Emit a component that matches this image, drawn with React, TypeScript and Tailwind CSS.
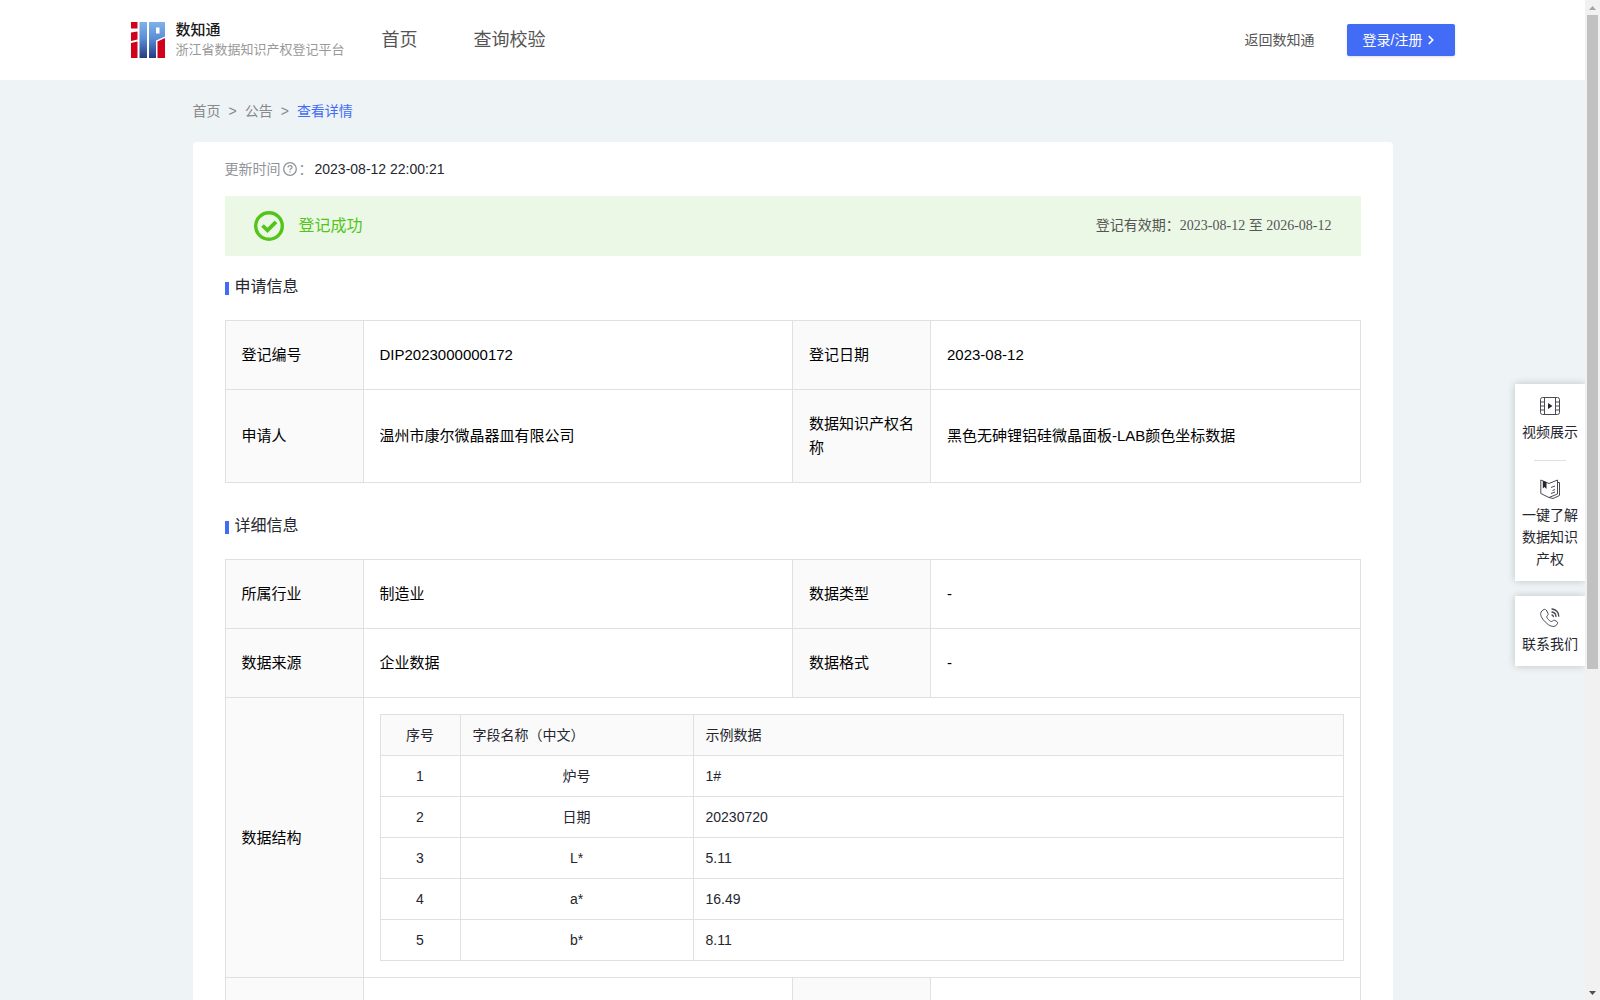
import React from 'react';
import { ChevronRight } from 'lucide-react';

const fields = [
  { name: '炉号', sample: '1#' },
  { name: '日期', sample: '20230720' },
  { name: 'L*', sample: '5.11' },
  { name: 'a*', sample: '16.49' },
  { name: 'b*', sample: '8.11' },
];

function Logo() {
  return (
    <svg width="34" height="36" viewBox="0 0 34 36" aria-hidden="true">
      <defs>
        <linearGradient id="logo-blue" gradientUnits="userSpaceOnUse" x1="0" y1="0" x2="0" y2="36">
          <stop offset="0" stopColor="#7fb2ea" />
          <stop offset="0.45" stopColor="#5b8fd6" />
          <stop offset="1" stopColor="#243a85" />
        </linearGradient>
      </defs>
      <path fill="#d0021b" d="M0 0h6.500v6.500H0zM0 10.500l6.500-1v8L0 19zM0 21l6.500-1.500V36H0z" />
      <path fill="url(#logo-blue)" d="M8.500 0h7.500v36H8.500z" />
      <path fill="url(#logo-blue)" d="M18 0h16v14.500l-9 4V36h-7zM25 5.500v6h3.500V5.500z" fillRule="evenodd" />
      <path fill="#d0021b" d="M26.500 19.500L34 16V36h-7.500z" />
    </svg>
  );
}

function VideoIcon() {
  return (
    <svg width="20" height="20" viewBox="0 0 20 20" fill="none" stroke="#4a4a52" aria-hidden="true">
      <rect x="0.5" y="1.5" width="19" height="17" rx="2" />
      <path d="M4.5 1.5v17M15.5 1.5v17M0.5 6h4M0.5 10h4M0.5 14h4M15.5 6h4M15.5 10h4M15.5 14h4" />
      <path d="M8 7v6l4.500-3z" fill="#25262f" stroke="none" />
    </svg>
  );
}

function BookIcon() {
  return (
    <svg width="20" height="20" viewBox="0 0 20 20" fill="none" stroke="#4a4a52" strokeLinejoin="round" aria-hidden="true">
      <path d="M9 4.500L.8 1v13.500L9 18.500l8.500-3.500V1z" />
      <path d="M17.500 3.500h2V16.500L13 19.500l-4-1M11 8.500l4-1.500M12.500 11.500l2.500-1M11 14.500l4-1.500" />
      <path d="M2.800 1.800v7.700l1.700-1.500L6.500 10V3.200z" fill="#25262f" stroke="none" />
    </svg>
  );
}

function PhoneIcon() {
  return (
    <svg width="20" height="20" viewBox="0 0 20 20" fill="none" stroke="#4a4a52" strokeLinecap="round" strokeLinejoin="round" aria-hidden="true">
      <path d="M6.500 2.500L8 5.500c.5 1-.2 1.600-1 2.500-.7.900.2 2.400 1.500 3.700s2.800 2.300 3.700 1.600c1-.8 1.600-1.500 2.600-1l2.400 1.500c1 .7.300 2-.5 3-1.800 2.200-5.500 2.700-10-1.500C2.200 11.300.5 8 .7 5.500.9 3.200 2.700 2.200 4 1.500c1-.5 2 0 2.500 1z" />
      <path d="M12 4c2.500.4 3.800 1.900 4 4.500M12 1c4 .5 6.500 3 6.800 7.200M12 7c.8.200 1.200.6 1.400 1.500" strokeWidth="1.300" />
    </svg>
  );
}

function SectionTitle({ children }: { children: React.ReactNode }) {
  return (
    <h2 className="flex items-center gap-1.5 text-base leading-6 text-[#25262f]">
      <span className="mt-[3px] h-[13px] w-1 bg-[#436cf6]" />
      {children}
    </h2>
  );
}

function Label({ children }: { children?: React.ReactNode }) {
  return (
    <th scope="row" className="border border-[#e0e0e0] bg-[#fafafa] px-4 py-[22px] text-left font-normal">
      {children}
    </th>
  );
}

function Value({ children }: { children?: React.ReactNode }) {
  return <td className="border border-[#e0e0e0] px-4 py-[22px]">{children}</td>;
}

function InfoTable({ children }: { children: React.ReactNode }) {
  return (
    <table className="w-full table-fixed border-collapse text-[15px] leading-6 text-black">
      <colgroup>
        <col className="w-[138px]" />
        <col />
        <col className="w-[138px]" />
        <col />
      </colgroup>
      <tbody>{children}</tbody>
    </table>
  );
}

function SideLink({ icon, children }: { icon: React.ReactNode; children: React.ReactNode }) {
  return (
    <a href="#" className="flex flex-col items-center gap-[5px] px-[7px] pt-3 pb-[11px] text-center text-sm leading-[22px] text-[#25262f]">
      {icon}
      <span>{children}</span>
    </a>
  );
}

export default function App() {
  return (
    <div className='relative flex h-screen bg-[#eef3f6] font-["Liberation_Sans","Noto_Sans_CJK_SC",sans-serif]'>
      <div className="min-w-0 flex-1 overflow-y-auto [scrollbar-width:none]">
        {/* Header */}
        <header className="bg-white">
          <div className="mx-auto flex h-20 max-w-[1324px] items-center">
            <a href="#" className="flex w-[251px] shrink-0 items-center gap-[11px]">
              <Logo />
              <span className="whitespace-nowrap">
                <span className="block text-[15px] leading-5 font-medium text-[#1a1a1a]">数知通</span>
                <span className="block text-[13px] leading-5 text-[#999]">浙江省数据知识产权登记平台</span>
              </span>
            </a>
            <nav className="flex gap-14 text-lg text-[#555]">
              <a href="#">首页</a>
              <a href="#">查询校验</a>
            </nav>
            <div className="ml-auto flex items-center gap-8 text-sm">
              <a href="#" className="text-[#555]">返回数知通</a>
              <button className="flex h-8 w-[108px] items-center gap-0.5 rounded-xs bg-[#436cf6] pl-4 whitespace-nowrap text-white shadow-sm">
                登录/注册
                <ChevronRight className="h-3.5 w-3.5 shrink-0" strokeWidth={3} />
              </button>
            </div>
          </div>
        </header>

        <main className="mx-auto max-w-[1200px]">
          {/* Breadcrumb */}
          <nav className="flex h-[62px] items-center gap-2 text-sm text-[#888]">
            <a href="#">首页</a>
            <span>&gt;</span>
            <a href="#">公告</a>
            <span>&gt;</span>
            <a href="#" className="text-[#436cf6]">查看详情</a>
          </nav>

          <div className="rounded-t bg-white px-8">
            {/* Update time */}
            <div className="flex h-[54px] items-center text-sm text-[#909399]">
              更新时间
              <svg className="mx-0.5" width="14" height="14" viewBox="0 0 14 14" fill="none" stroke="#909399" aria-hidden="true">
                <circle cx="7" cy="7" r="6.300" strokeWidth="1.300" />
                <path d="M5 5.600c0-1.200.9-1.900 2-1.900s2 .7 2 1.800c0 1.300-2 1.400-2 2.800M7 9.300v1.200" strokeWidth="1.200" />
              </svg>
              ：
              <span className="ml-0.5 text-[#25262f]">2023-08-12 22:00:21</span>
            </div>

            {/* Status */}
            <div className="flex h-[60px] items-center justify-between bg-[#ebf8e6] px-[29px]">
              <div className="flex items-center gap-[15px] text-base text-[#52c41a]">
                <svg width="30" height="30" viewBox="0 0 30 30" fill="none" stroke="#52c41a" aria-hidden="true">
                  <circle cx="15" cy="15" r="13.300" strokeWidth="3.400" />
                  <path d="M8.500 14.500l5 4.800 8.500-8.500" strokeWidth="3.800" />
                </svg>
                登记成功
              </div>
              <p className='font-["Liberation_Serif","Noto_Sans_CJK_SC",serif] text-sm text-[#555]'>
                登记有效期：2023-08-12 至 2026-08-12
              </p>
            </div>

            {/* Application info */}
            <section className="pt-[19px]">
              <SectionTitle>申请信息</SectionTitle>
              <div className="mt-[21px]">
                <InfoTable>
                  <tr>
                    <Label>登记编号</Label>
                    <Value>DIP2023000000172</Value>
                    <Label>登记日期</Label>
                    <Value>2023-08-12</Value>
                  </tr>
                  <tr>
                    <Label>申请人</Label>
                    <Value>温州市康尔微晶器皿有限公司</Value>
                    <Label>数据知识产权名称</Label>
                    <Value>黑色无砷锂铝硅微晶面板-LAB颜色坐标数据</Value>
                  </tr>
                </InfoTable>
              </div>
            </section>

            {/* Details */}
            <section className="pt-[31px]">
              <SectionTitle>详细信息</SectionTitle>
              <div className="mt-[21px]">
                <InfoTable>
                  <tr>
                    <Label>所属行业</Label>
                    <Value>制造业</Value>
                    <Label>数据类型</Label>
                    <Value>-</Value>
                  </tr>
                  <tr>
                    <Label>数据来源</Label>
                    <Value>企业数据</Value>
                    <Label>数据格式</Label>
                    <Value>-</Value>
                  </tr>
                  <tr>
                    <Label>数据结构</Label>
                    <td colSpan={3} className="border border-[#e0e0e0] p-4">
                      <table className="w-full table-fixed border-collapse text-sm text-[#25262f]">
                        <thead className="bg-[#fafafa]">
                          <tr>
                            <th className="w-20 border border-[#e0e0e0] py-2.5 font-normal">序号</th>
                            <th className="w-[233px] border border-[#e0e0e0] px-3 py-2.5 text-left font-normal">字段名称（中文）</th>
                            <th className="border border-[#e0e0e0] px-3 py-2.5 text-left font-normal">示例数据</th>
                          </tr>
                        </thead>
                        <tbody>
                          {fields.map((field, i) => (
                            <tr key={field.name}>
                              <td className="border border-[#e0e0e0] py-2.5 text-center">{i + 1}</td>
                              <td className="border border-[#e0e0e0] px-3 py-2.5 text-center">{field.name}</td>
                              <td className="border border-[#e0e0e0] px-3 py-2.5">{field.sample}</td>
                            </tr>
                          ))}
                        </tbody>
                      </table>
                    </td>
                  </tr>
                  <tr>
                    <Label />
                    <Value />
                    <Label />
                    <Value />
                  </tr>
                </InfoTable>
              </div>
            </section>
          </div>
        </main>
      </div>

      {/* Floating side links */}
      <aside className="absolute top-96 right-[15px] w-[70px] space-y-[15px]">
        <div className="bg-white shadow-[0_0_8px_rgba(0,0,0,0.2)]">
          <SideLink icon={<VideoIcon />}>视频展示</SideLink>
          <hr className="mx-auto my-1.5 w-8 border-[#e0e0e0]" />
          <SideLink icon={<BookIcon />}>一键了解数据知识产权</SideLink>
        </div>
        <div className="bg-white shadow-[0_0_8px_rgba(0,0,0,0.2)]">
          <SideLink icon={<PhoneIcon />}>联系我们</SideLink>
        </div>
      </aside>

      {/* Scrollbar */}
      <div className="relative z-10 flex w-[15px] shrink-0 flex-col items-center bg-[#f1f1f1]">
        <div className="flex h-[15px] items-center">
          <svg width="7" height="4" viewBox="0 0 7 4" aria-hidden="true">
            <path d="M0 4L3.500 0L7 4z" fill="#a3a3a3" />
          </svg>
        </div>
        <div className="h-[654px] w-full border-x-2 border-[#f1f1f1] bg-[#c1c1c1]" />
        <div className="mt-auto flex h-[15px] items-center">
          <svg width="7" height="4" viewBox="0 0 7 4" aria-hidden="true">
            <path d="M0 0L3.500 4L7 0z" fill="#505050" />
          </svg>
        </div>
      </div>
    </div>
  );
}
